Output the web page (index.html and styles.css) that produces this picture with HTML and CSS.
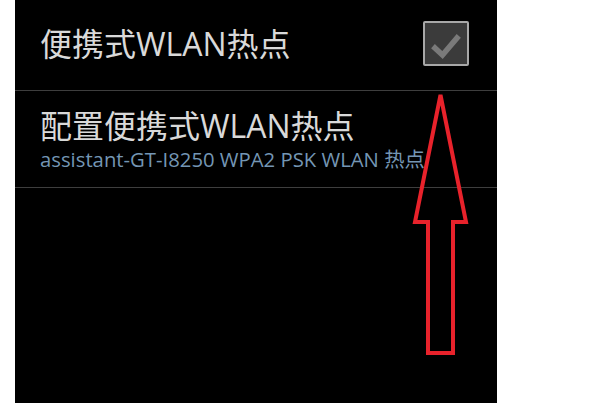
FILE: index.html
```html
<!DOCTYPE html>
<html lang="zh">
<head>
<meta charset="utf-8">
<link rel="stylesheet" href="styles.css">
</head>
<body>
<div class="panel">
  <div class="row row-toggle">
    <div class="title">便携式WLAN热点</div>
    <div class="checkbox">
      <svg width="42" height="41" viewBox="0 0 42 41">
        <path d="M10 25 L17.5 32 L32 15" fill="none" stroke="#7a7a7a" stroke-width="5.5" stroke-linecap="square" stroke-linejoin="miter"/>
      </svg>
    </div>
  </div>
  <div class="row row-config">
    <div class="title">配置便携式WLAN热点</div>
    <div class="summary">assistant-GT-I8250 WPA2 PSK WLAN 热点</div>
  </div>
  <svg class="arrow" width="596" height="403" viewBox="0 0 596 403">
    <path d="M440.5 95 L466 222 L453 222 L453 353 L428 353 L428 222 L415 222 Z" fill="none" stroke="#e8222b" stroke-width="4" stroke-linejoin="miter"/>
  </svg>
</div>
</body>
</html>
```
FILE: styles.css
```css
html, body {
  margin: 0;
  padding: 0;
  background: #ffffff;
}
body {
  width: 596px;
  height: 403px;
  overflow: hidden;
  font-family: "Open Sans", "Noto Sans CJK SC", sans-serif;
}
.panel {
  position: relative;
  margin-left: 15px;
  width: 482px;
  height: 403px;
  background: #000000;
}
.row {
  box-sizing: border-box;
  border-bottom: 1px solid #3e3e3e;
  padding-left: 25px;
}
.row-toggle {
  height: 91px;
  display: flex;
  align-items: center;
  justify-content: space-between;
  padding-right: 28px;
  padding-bottom: 3px;
}
.row-config {
  height: 97px;
  display: flex;
  flex-direction: column;
  justify-content: center;
  padding-top: 0;
}
.title {
  color: #d9d9d9;
  font-size: 32px;
  line-height: 38px;
  font-family: "Open Sans", "Noto Sans CJK SC", sans-serif;
}
.summary {
  color: #7496b4;
  font-size: 20.3px;
  line-height: 26px;
  margin-top: 1px;
}
.checkbox {
  box-sizing: border-box;
  width: 46px;
  height: 45px;
  border: 2px solid #a8a8a8;
  border-radius: 2px;
  background: #3b3b3b;
  display: flex;
  align-items: center;
  justify-content: center;
}
.checkbox svg {
  display: block;
}
.arrow {
  position: absolute;
  left: -15px;
  top: 0;
  pointer-events: none;
}
```
